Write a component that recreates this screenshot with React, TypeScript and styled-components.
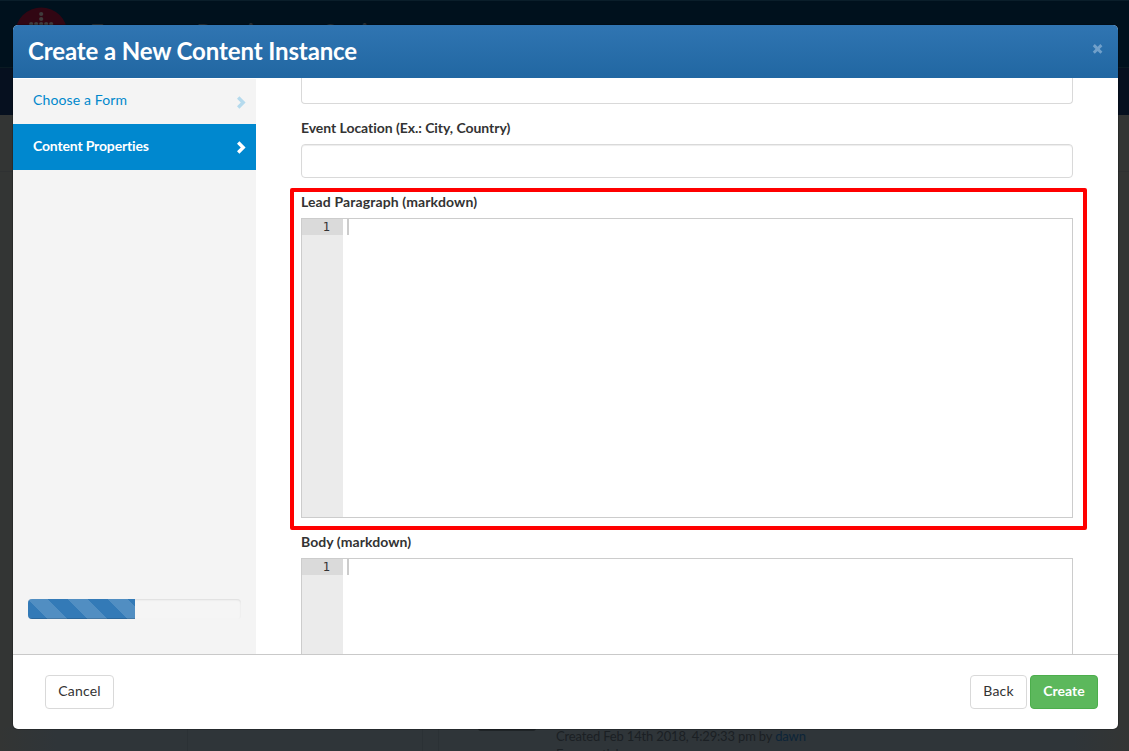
import React from "react";
import styled, { createGlobalStyle } from "styled-components";

const Global = createGlobalStyle`
  * { box-sizing: border-box; }
  html, body { margin: 0; height: 100%; overflow: hidden; }
  body { font: 400 14px/20px Lato, sans-serif; color: #333; background: #333534; }
  button { font-family: inherit; margin: 0; }
`;

const Page = styled.div`
  position: relative;
  width: 1129px;
  height: 751px;
  overflow: hidden;
  display: flex;
  flex-direction: column;
`;

const SiteBar = styled.header`
  flex: none;
  height: 68px;
  display: flex;
  gap: 22px;
  padding: 6px 15px 0;
  background: #00111d;
  border-top: 1px solid #0a1e2a;
  border-bottom: 1px solid #0a1a22;
`;

const SiteTitle = styled.div`
  padding-top: 11px;
  font-size: 24px;
  line-height: 30px;
  letter-spacing: -0.1px;
  font-weight: 700;
  color: #2c3236;
`;

const NavBar = styled.div`
  flex: none;
  height: 47px;
  background: #06101f;
`;

const SiteBody = styled.main`
  flex: 1;
  display: flex;
  flex-direction: column;
  justify-content: flex-end;
  background: linear-gradient(#333534 0 56px, #2f3132 56px 57px, #333534 57px);
`;

const ListRow = styled.div`
  height: 24px;
  display: flex;
  align-items: flex-start;
  background: linear-gradient(90deg, #333534, #2f3539 5%, #2f3539 95%, #333534);
`;

const RowCell = styled.div<{ $w: number }>`
  width: ${(p) => p.$w}px;
  height: 24px;
  border-right: 1px solid #2b3135;
`;

const Thumb = styled.div`
  width: 58px;
  height: 4px;
  margin: 0 20px 0 39px;
  border-radius: 0 0 3px 3px;
  background: #1f2427;
`;

const RowText = styled.div`
  height: 24px;
  overflow: hidden;
  font-size: 13px;
  line-height: 18px;
  letter-spacing: -0.16px;
  color: #1b2024;
  white-space: nowrap;
  span { color: #0c2438; }
`;

const Modal = styled.section`
  position: absolute;
  left: 13px;
  top: 25px;
  width: 1105px;
  height: 704px;
  display: flex;
  flex-direction: column;
  overflow: hidden;
  background: #fff;
  border-radius: 5px;
  box-shadow: 0 0 0 1px rgba(0, 0, 0, 0.2);
`;

const ModalHeader = styled.div`
  flex: none;
  height: 53px;
  display: flex;
  align-items: center;
  justify-content: space-between;
  padding: 0 15px 5px;
  background: linear-gradient(#3075b2, #2167a2);
`;

const ModalTitle = styled.h3`
  margin: 0;
  padding-top: 3px;
  font-size: 24px;
  line-height: 26px;
  font-weight: 700;
  letter-spacing: -0.12px;
  color: #fff;
`;

const ModalMain = styled.div`
  flex: 1;
  min-height: 0;
  display: flex;
`;

const Sidebar = styled.nav`
  flex: none;
  width: 243px;
  display: flex;
  flex-direction: column;
  background: #f4f4f4;
  border-top: 1px solid #fff;
`;

const Step = styled.div<{ $active?: boolean }>`
  height: ${(p) => (p.$active ? 46 : 45)}px;
  display: flex;
  align-items: center;
  justify-content: space-between;
  padding: 0 10px 0 20px;
  color: ${(p) => (p.$active ? "#fff" : "#0088cc")};
  background: ${(p) => (p.$active ? "#0088cf" : "transparent")};
  font-weight: ${(p) => (p.$active ? 700 : 400)};
`;

const StepName = styled.span<{ $spacing: number }>`
  padding-bottom: 3px;
  letter-spacing: ${(p) => p.$spacing}px;
`;

const Progress = styled.div`
  margin: auto 15px 35px;
  height: 20px;
  background: #f5f5f5;
  border-radius: 4px;
  overflow: hidden;
  box-shadow: inset 0 1px 2px rgba(0, 0, 0, 0.1);
`;

const ProgressFill = styled.div`
  width: 107px;
  height: 100%;
  background: linear-gradient(45deg, rgba(255,255,255,0.15) 25%, transparent 25%, transparent 50%, rgba(255,255,255,0.15) 50%, rgba(255,255,255,0.15) 75%, transparent 75%) 0 0 / 40px 40px #337ab7;
  box-shadow: inset 0 -1px 0 rgba(0, 0, 0, 0.15);
`;

const Form = styled.div`
  flex: 1;
  overflow: hidden;
  display: flex;
  flex-direction: column;
  padding: 0 31px 0 34px;
`;

const Input = styled.div<{ $cut?: boolean }>`
  flex: none;
  height: ${(p) => (p.$cut ? 26 : 34)}px;
  margin: ${(p) => (p.$cut ? "0 14px 14px 11px" : "6px 14px 10px 11px")};
  border: 1px solid #d9d9d9;
  border-top-width: ${(p) => (p.$cut ? 0 : 1)}px;
  border-radius: ${(p) => (p.$cut ? "0 0 4px 4px" : "4px")};
  box-shadow: ${(p) => (p.$cut ? "none" : "inset 0 1px 1px rgba(0,0,0,0.075)")};
`;

const FieldLabel = styled.label<{ $spacing: number }>`
  flex: none;
  height: 20px;
  margin-left: 11px;
  font-size: 14px;
  line-height: 20px;
  font-weight: 700;
  letter-spacing: ${(p) => p.$spacing}px;
  color: #333;
`;

const Group = styled.div<{ $marked?: boolean }>`
  flex: none;
  display: flex;
  flex-direction: column;
  height: ${(p) => (p.$marked ? 342 : 300)}px;
  padding: ${(p) => (p.$marked ? "0 10px 0 7px" : "2px 14px 0 11px")};
  border: ${(p) => (p.$marked ? "4px solid #ff0000" : "0")};
  border-radius: 2px;
  ${FieldLabel} { margin-left: 0; }
`;

const Editor = styled.div`
  flex: none;
  height: 300px;
  margin-top: 6px;
  display: flex;
  border: 1px solid #ccc;
`;

const Gutter = styled.div`
  width: 41px;
  background: #ebebeb;
`;

const LineNumber = styled.div`
  height: 16px;
  padding-right: 13px;
  text-align: right;
  font: 12px/16px "DejaVu Sans Mono", monospace;
  background: #dadada;
`;

const Caret = styled.div`
  width: 2px;
  height: 16px;
  margin-left: 4px;
  background: #ccc;
`;

const Footer = styled.footer`
  flex: none;
  height: 75px;
  display: flex;
  gap: 3px;
  padding: 20px 20px 0 32px;
  border-top: 1px solid #c9c9c9;
`;

const Button = styled.button<{ $w: number; $primary?: boolean; $start?: boolean }>`
  width: ${(p) => p.$w}px;
  height: 34px;
  padding: 0 0 2px;
  margin-right: ${(p) => (p.$start ? "auto" : "0")};
  font-size: 14px;
  line-height: 20px;
  letter-spacing: ${(p) => (p.$primary ? 0 : 0.2)}px;
  font-weight: ${(p) => (p.$primary ? 700 : 400)};
  color: ${(p) => (p.$primary ? "#fff" : "#333")};
  background: ${(p) => (p.$primary ? "#5cb85c" : "#fff")};
  border: 1px solid ${(p) => (p.$primary ? "#4cae4c" : "#d9d9d9")};
  border-radius: 4px;
`;

const logoDots = [[26, 7], [26, 12], [16, 17], [21, 17], [26, 17], [31, 17], [36, 17]];

const Logo = () => (
  <svg width="53" height="53" viewBox="0 0 53 53">
    <circle cx="26.3" cy="26.5" r="26" fill="#310613" />
    <g fill="#3f3c3c">
      {logoDots.map(([x, y]) => (
        <circle key={`${x}-${y}`} cx={x + 0.2} cy={y} r="2.1" />
      ))}
    </g>
  </svg>
);

const Chevron = ({ color }: { color: string }) => (
  <svg width="10" height="14" viewBox="0 0 10 14">
    <path d="M1 3.7 3.4 1.3 9.6 7.5 3.4 13.7 1 11.3 4.8 7.5Z" fill={color} />
  </svg>
);

const CloseIcon = () => (
  <svg width="11" height="12" viewBox="0 0 11 12">
    <path d="M1.8 2.1 9.4 9.7M9.4 2.1 1.8 9.7" stroke="#71a0ca" strokeWidth="2.9" />
  </svg>
);

const MarkdownField = ({ label, spacing, marked }: { label: string; spacing: number; marked?: boolean }) => (
  <Group $marked={marked}>
    <FieldLabel $spacing={spacing}>{label}</FieldLabel>
    <Editor>
      <Gutter><LineNumber>1</LineNumber></Gutter>
      <Caret />
    </Editor>
  </Group>
);

export default function App() {
  return (
    <Page>
      <Global />
      <SiteBar>
        <Logo />
        <SiteTitle>European Respiratory Society</SiteTitle>
      </SiteBar>
      <NavBar />
      <SiteBody>
        <ListRow>
          <RowCell $w={188} />
          <RowCell $w={235} />
          <RowCell $w={16} />
          <Thumb />
          <RowText>
            Created Feb 14th 2018, 4:29:33 pm by <span>dawn</span>
            <br />
            Form: article
          </RowText>
        </ListRow>
      </SiteBody>
      <Modal>
        <ModalHeader>
          <ModalTitle>Create a New Content Instance</ModalTitle>
          <CloseIcon />
        </ModalHeader>
        <ModalMain>
          <Sidebar>
            <Step><StepName $spacing={0.12}>Choose a Form</StepName><Chevron color="#b5daed" /></Step>
            <Step $active><StepName $spacing={-0.16}>Content Properties</StepName><Chevron color="#fff" /></Step>
            <Progress><ProgressFill /></Progress>
          </Sidebar>
          <Form>
            <Input $cut />
            <FieldLabel $spacing={-0.05}>Event Location (Ex.: City, Country)</FieldLabel>
            <Input />
            <MarkdownField label="Lead Paragraph (markdown)" spacing={0.12} marked />
            <MarkdownField label="Body (markdown)" spacing={0.06} />
          </Form>
        </ModalMain>
        <Footer>
          <Button $w={69} $start>Cancel</Button>
          <Button $w={57}>Back</Button>
          <Button $w={68} $primary>Create</Button>
        </Footer>
      </Modal>
    </Page>
  );
}
